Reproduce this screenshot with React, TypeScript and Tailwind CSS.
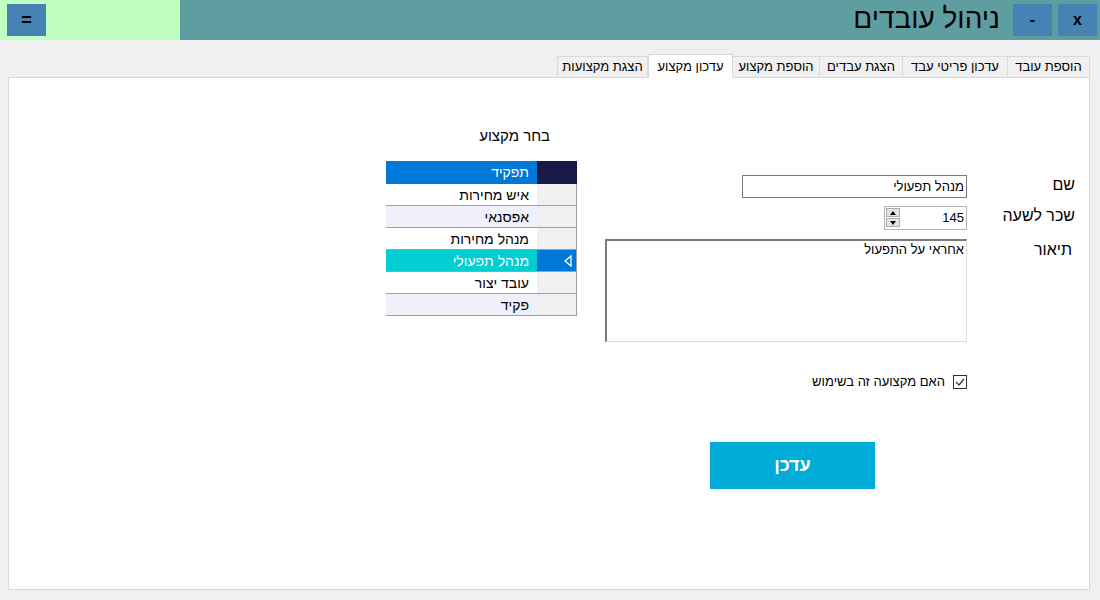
import React from "react";

const rows = [
  { name: "איש מחירות", alt: false, sel: false },
  { name: "אפסנאי", alt: true, sel: false },
  { name: "מנהל מחירות", alt: false, sel: false },
  { name: "מנהל תפעולי", alt: true, sel: true },
  { name: "עובד יצור", alt: false, sel: false },
  { name: "פקיד", alt: true, sel: false },
];

const tabs = [
  { t: "הוספת עובד", w: "w-[82px]" },
  { t: "עדכון פריטי עבד", w: "w-[105px]" },
  { t: "הצגת עבדים", w: "w-[83px]" },
  { t: "הוספת מקצוע", w: "w-[87px]" },
  { t: "עדכון מקצוע", w: "w-[85px]", active: true },
  { t: "הצגת מקצועות", w: "w-[91px]" },
];

export default function App() {
  return (
    <div
      className="w-[1100px] h-[600px] bg-[#f0f0f0] flex flex-col overflow-hidden"
      style={{ fontFamily: '"Liberation Sans", "DejaVu Sans", sans-serif' }}
    >
      {/* Title bar */}
      <div className="h-[40px] flex shrink-0">
        <div className="w-[180px] bg-[#c0ffc0] flex items-center pl-[7px]">
          <div className="w-[39px] h-[32px] bg-[#4682b4] flex items-center justify-center text-black font-bold text-[18px] leading-none">
            =
          </div>
        </div>
        <div className="flex-1 bg-[#5f9ea0] flex items-center justify-end pr-[3px]">
          <div dir="rtl" className="text-[28px] text-black leading-none mr-[13px] pb-[2px]">
            ניהול עובדים
          </div>
          <div className="w-[39px] h-[32px] bg-[#4682b4] flex items-center justify-center font-bold text-[16px] text-black mr-[6px]">
            -
          </div>
          <div className="w-[39px] h-[32px] bg-[#4682b4] flex items-center justify-center font-bold text-[16px] text-black">
            x
          </div>
        </div>
      </div>

      {/* Tabs */}
      <div className="mt-[14px] pr-[10px] flex justify-end h-[24px] items-end relative z-10">
        <div dir="rtl" className="flex items-end">
          {tabs.map((tab) =>
            tab.active ? (
              <div
                key={tab.t}
                className={`${tab.w} h-[24px] bg-white border border-[#d9d9d9] border-b-0 flex items-start justify-center pt-[2px] text-[13px] text-black`}
              >
                {tab.t}
              </div>
            ) : (
              <div
                key={tab.t}
                className={`${tab.w} h-[22px] bg-[#f0f0f0] border border-[#d9d9d9] border-l-0 last:border-l flex items-center justify-center text-[13px] text-black`}
              >
                {tab.t}
              </div>
            )
          )}
        </div>
      </div>

      {/* Panel */}
      <div className="ml-[8px] w-[1082px] h-[513px] -mt-[1px] bg-white border border-[#d9d9d9] flex items-start pl-[377px]">
        {/* Grid column */}
        <div className="w-[191px] flex flex-col">
          <div dir="rtl" className="mt-[48px] pr-[27px] text-[15px] text-black leading-[20px]">
            בחר מקצוע
          </div>
          <div className="mt-[15px] flex flex-col">
            <div className="flex h-[23px]">
              <div dir="rtl" className="w-[151px] bg-[#0078d7] text-white text-[14px] flex items-center pr-[8px]">
                תפקיד
              </div>
              <div className="w-[40px] bg-[#191947]" />
            </div>
            <div className="w-[191px] border-r border-[#a0a0a0] flex flex-col">
              {rows.map((r) => (
                <div key={r.name} className="flex h-[22px]">
                  <div
                    dir="rtl"
                    className={`w-[151px] flex items-center pr-[8px] pt-[1px] text-[14px] border-b border-[#a0a0a0] ${
                      r.sel ? "bg-[#00ced1] text-white" : r.alt ? "bg-[#f0f0fa] text-black" : "bg-white text-black"
                    }`}
                  >
                    {r.name}
                  </div>
                  <div
                    className={`flex-1 flex items-center justify-end pr-[4px] border-b ${
                      r.sel ? "bg-[#0078d7] border-[#a0a0a0]" : "bg-[#f0f0f0] border-[#a0a0a0]"
                    }`}
                  >
                    {r.sel && (
                      <svg width="8" height="12" viewBox="0 0 8 12">
                        <path d="M7 1 L1 6 L7 11 Z" fill="#0078d7" stroke="white" strokeWidth="1.3" />
                      </svg>
                    )}
                  </div>
                </div>
              ))}
            </div>
          </div>
        </div>

        {/* Form column */}
        <div dir="rtl" className="ml-[28px] w-[470px] flex flex-col pt-[97px]">
          <div className="flex items-start h-[23px]">
            <div className="w-[108px] text-[16px] text-black leading-[20px]">שם</div>
            <div className="w-[225px] h-[23px] border border-[#7a7a7a] flex items-center pr-[2px] text-[13px] text-black">
              מנהל תפעולי
            </div>
          </div>
          <div className="flex items-start h-[24px] mt-[8px]">
            <div className="w-[108px] text-[16px] text-black leading-[20px]">שכר לשעה</div>
            <div className="w-[83px] h-[24px] border border-[#b4b4b4] flex items-center justify-between pl-[1px] pr-[2px]">
              <span className="text-[13px] text-black" dir="ltr">145</span>
              <div className="w-[14px] h-[20px] flex flex-col gap-[1px]">
                <div className="h-[9px] bg-[#e5e5e5] border border-[#adadad] flex items-center justify-center">
                  <svg width="6" height="4" viewBox="0 0 6 4"><path d="M0 4 L3 0 L6 4 Z" fill="black" /></svg>
                </div>
                <div className="h-[9px] bg-[#e5e5e5] border border-[#adadad] flex items-center justify-center">
                  <svg width="6" height="4" viewBox="0 0 6 4"><path d="M0 0 L3 4 L6 0 Z" fill="black" /></svg>
                </div>
              </div>
            </div>
          </div>
          <div className="flex items-start mt-[9px]">
            <div className="w-[108px] text-[16px] text-black leading-[20px] pr-[3px] pt-[1px]">תיאור</div>
            <div className="w-[362px] h-[103px] border border-[#dcdcdc] border-t-[#7a7a7a] border-l-[#7a7a7a] border-t-2 border-l-2 pr-[2px] text-[13px] text-black leading-[18px]">
              אחראי על התפעול
            </div>
          </div>
          <div className="flex items-center mt-[33px] mr-[108px] h-[14px]">
            <div className="w-[14px] h-[14px] border border-[#333] flex items-center justify-center bg-white">
              <svg width="10" height="8" viewBox="0 0 10 8">
                <path d="M1 4 L4 7 L9 1" fill="none" stroke="#333" strokeWidth="1.2" />
              </svg>
            </div>
            <div className="mr-[8px] text-[13px] text-black">האם מקצועה זה בשימוש</div>
          </div>
          <div className="mt-[53px] mr-[200px] w-[165px] h-[47px] bg-[#00acd8] flex items-center justify-center text-white font-bold text-[18px]">
            עדכן
          </div>
        </div>
      </div>
    </div>
  );
}
